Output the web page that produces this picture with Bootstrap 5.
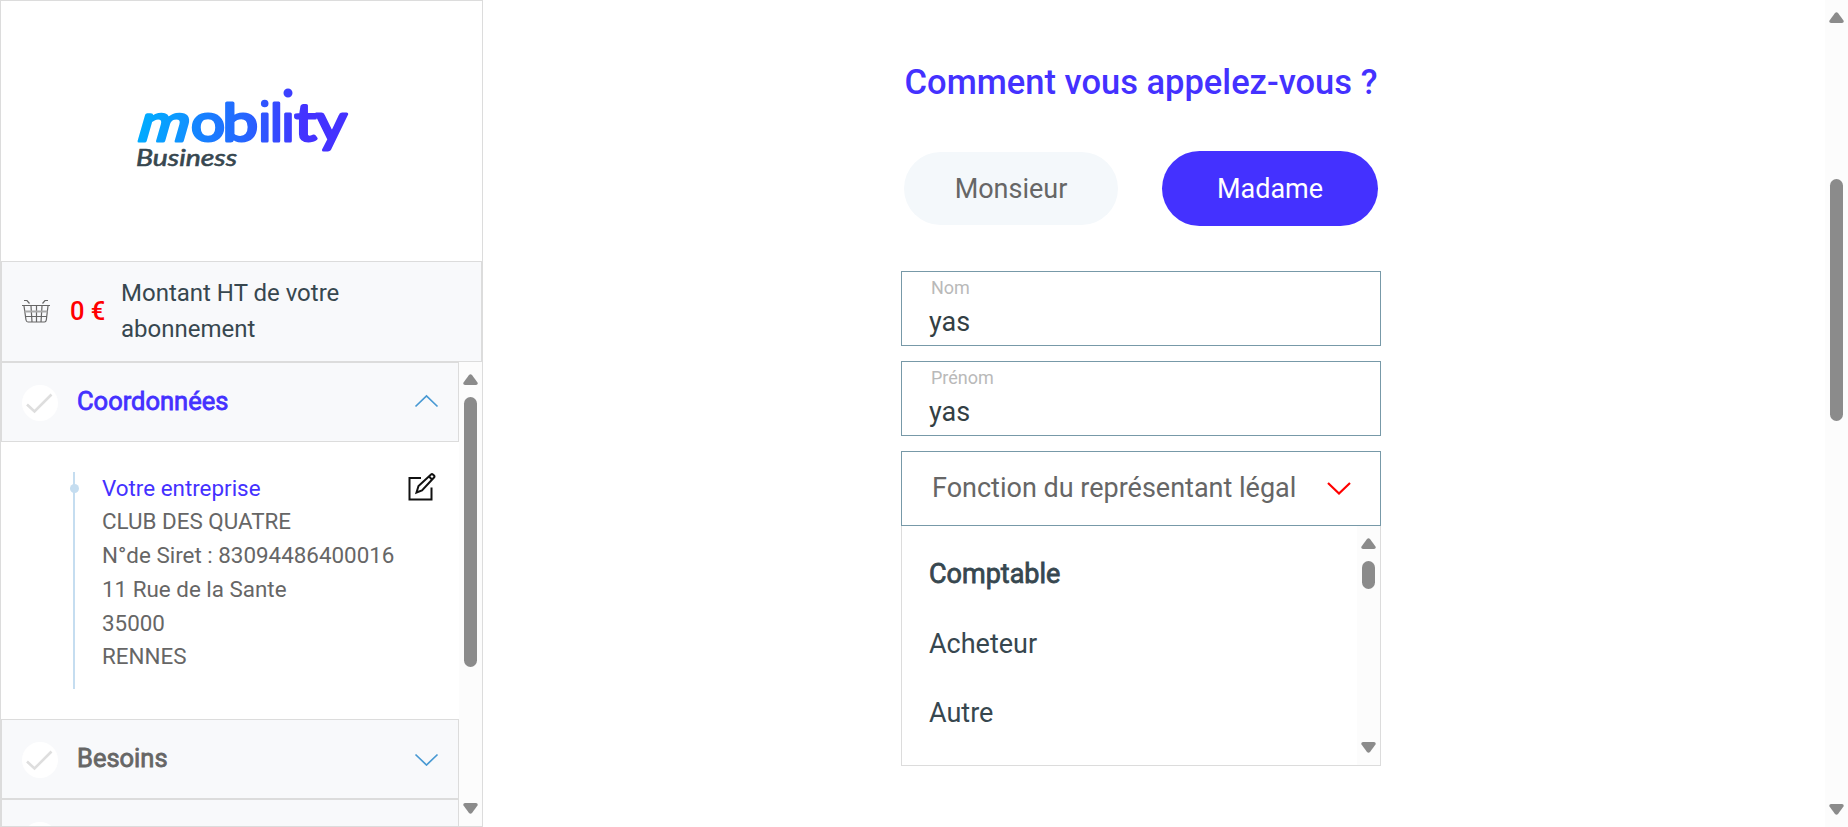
<!DOCTYPE html>
<html lang="fr">
<head>
<meta charset="utf-8">
<title>Mobility Business</title>
<link href="https://cdn.jsdelivr.net/npm/bootstrap@5.3.0/dist/css/bootstrap.min.css" rel="stylesheet">
<style>
body{font-family:Roboto,"Liberation Sans",sans-serif;color:#37474f;background:#fff;height:827px;overflow:hidden}
.side{width:483px;border:1px solid #dcdcdc}
.logo-box{height:260px}
.amount{height:101px;border:1px solid #dcdcdc;background:#f8f9fb;font-size:24px;line-height:36px;color:#37474f;padding:0 0 2px 19px}
.price{color:#f00;font-weight:500;font-size:25.5px;margin-left:19px;width:51px}
.step{height:80px;border:1px solid #dcdcdc;background:#f8f9fb;padding:0 19px 0 20px}
.tick{width:36px;height:36px;background:#fff;border-radius:50%;margin-top:2px}
.step-title{font-size:25.5px;margin:-1px 0 0 19px;color:#666;-webkit-text-stroke:.8px currentColor}
.vivid{color:#4431ff}
.details{height:277px;padding:30px 23px 0 72px}
.rail{width:2px;height:217px;background:#c5ddf0}
.rail-dot{width:9px;height:9px;border-radius:50%;background:#c5ddf0;left:-3px;top:12px}
.lines{font-size:22.4px;line-height:33.75px;color:#666;margin:-.5px 0 0 27px}
.bar{width:23px;background:#fcfcfc;padding:12px 0}
.thumb{width:13px;border-radius:7px;background:#8b8b8b}
.form-col{width:480px;margin-left:418px;padding-top:58px}
.ask{font-size:34.5px;font-weight:500;line-height:48px;color:#4431ff;text-align:center;white-space:nowrap}
.pick{border-radius:38px;font-size:27px;line-height:1;padding:2px 0 0}
.pick-off{width:214px;height:73px;background:#f4f8fb;color:#666}
.pick-on{width:216px;height:75px;background:#4431ff;color:#fff}
.field{height:75px;border:1px solid #7799a8;margin-bottom:15px;padding:0 27px}
.field-label{font-size:18px;line-height:22px;color:#b9b9b9;padding:5px 0 0 2px}
.field-value{font-size:27px;line-height:32px;margin-top:7px;color:#333f44}
.picker{font-size:27px;color:#666;padding:0 29px 0 30px;margin-bottom:0;white-space:nowrap}
.options{height:240px;border:1px solid #dcdcdc;border-top:0}
.option{font-size:27px;height:69.5px;padding-left:27px}
</style>
</head>
<body class="d-flex">
<svg width="0" height="0" class="position-absolute"><defs>
<linearGradient id="ink" gradientUnits="userSpaceOnUse" x1="2" y1="0" x2="210" y2="0"><stop offset="0" stop-color="#00abff"/><stop offset=".5" stop-color="#2468ff"/><stop offset=".8" stop-color="#4433ff"/><stop offset="1" stop-color="#4431ff"/></linearGradient>
<linearGradient id="ink-m" gradientUnits="userSpaceOnUse" x1="0" y1="0" x2="50" y2="0"><stop offset="0" stop-color="#00abff"/><stop offset="1" stop-color="#1390ff"/></linearGradient>
<symbol id="up" viewBox="0 0 15 11"><path d="M6 .9Q7.500-.6 9 .9L14.500 8.500Q15.300 10.800 13 11H2Q-.3 10.800.5 8.500Z" fill="#8b8b8b"/></symbol>
<symbol id="tick" viewBox="0 0 36 36"><path d="M5 19.500 12.500 26.500 29.500 9.500" fill="none" stroke="#dedede" stroke-width="2.600"/></symbol>
</defs></svg>

<aside class="side h-100 d-flex flex-column flex-shrink-0 overflow-hidden">
  <div class="logo-box flex-shrink-0">
    <svg width="260" height="190" viewBox="0 0 260 190" class="d-block" style="margin-left:134px">
      <g fill="url(#ink)" stroke="url(#ink)" stroke-width="3" stroke-linejoin="round" font-family="Lato" font-size="52">
        <text transform="translate(2 139.500) skewX(-16)" x="-2" y="0" fill="url(#ink-m)" stroke="url(#ink-m)" textLength="51" lengthAdjust="spacingAndGlyphs">m</text>
        <text y="139.500" x="56" textLength="34" lengthAdjust="spacingAndGlyphs">o</text>
        <text y="139.500" x="87.500" textLength="35.500" lengthAdjust="spacingAndGlyphs">b</text>
        <text y="139.500" x="123.600 135.300 146.800">ılı</text>
        <text y="139.500" x="159.500" textLength="22" lengthAdjust="spacingAndGlyphs">t</text>
        <text y="139.500" x="181" textLength="31" lengthAdjust="spacingAndGlyphs">y</text>
        <circle cx="129.700" cy="102.500" r="2.300"/><circle cx="153" cy="92" r="3"/>
      </g>
      <text x="1" y="165" font-family="Lato" font-size="22.500" font-weight="400" font-style="italic" fill="#37474f" stroke="#37474f" stroke-width=".6" textLength="101" lengthAdjust="spacingAndGlyphs">Business</text>
    </svg>
  </div>
  <div class="amount d-flex align-items-center flex-shrink-0">
    <svg width="30" height="26" viewBox="0 0 30 26" fill="none" stroke="#666" stroke-width="1.200"><path d="M1 7.500H29M3 8 5 22Q5.400 24 7 24H23.500Q25 24 25.300 22L27 8M4 18.500H26M10 8 11 24M15.500 8V24M21 8 20 24M3 2.500H6L8.500 5.500M27 2.500H24L21.500 5.500"/><path d="M3.500 13.500H26.500" stroke="#aaa" stroke-width="2"/></svg>
    <div class="price">0 €</div>
    <div>Montant HT de votre<br>abonnement</div>
  </div>
  <div class="d-flex flex-grow-1 overflow-hidden">
    <div class="flex-grow-1">
      <div class="step d-flex align-items-center">
        <svg class="tick"><use href="#tick"/></svg>
        <div class="step-title vivid">Coordonnées</div>
        <svg class="ms-auto" style="margin-top:-3px" width="25" height="14" viewBox="0 0 25 14" fill="none" stroke="#4899d3" stroke-width="1.700"><path d="M1.500 12.500 12.500 2 23.500 12.500"/></svg>
      </div>
      <div class="details d-flex">
        <div class="rail position-relative"><div class="rail-dot position-absolute"></div></div>
        <div class="lines"><div class="vivid">Votre entreprise</div>CLUB DES QUATRE<br>N°de Siret : 83094486400016<br>11 Rue de la Sante<br>35000<br>RENNES</div>
        <svg class="ms-auto flex-shrink-0" width="28" height="29" viewBox="0 0 28 29" fill="none" stroke="#111" stroke-width="2"><path d="M13 6H1.500V27.500H23.500V15.500"/><path d="M8.500 20.500 10.500 14 23 2.500Q24 1.700 25.200 2.700L26 3.500Q27 4.500 26 5.500L14 18.500ZM21 4.500 24 7.500"/></svg>
      </div>
      <div class="step d-flex align-items-center">
        <svg class="tick"><use href="#tick"/></svg>
        <div class="step-title">Besoins</div>
        <svg class="ms-auto" width="25" height="14" viewBox="0 0 25 14" fill="none" stroke="#4899d3" stroke-width="1.700"><path d="M1.500 2.500 12.500 13 23.500 2.500"/></svg>
      </div>
      <div class="step d-flex align-items-center"><div class="tick"></div></div>
    </div>
    <div class="bar d-flex flex-column align-items-center">
      <svg width="15" height="11"><use href="#up"/></svg>
      <div class="thumb" style="height:270px;margin-top:12px"></div>
      <svg class="mt-auto" width="15" height="11" transform="rotate(180)"><use href="#up"/></svg>
    </div>
  </div>
</aside>

<main class="flex-grow-1">
  <div class="form-col">
    <div class="ask">Comment vous appelez-vous ?</div>
    <div class="d-flex justify-content-between align-items-center" style="margin:45px 3px">
      <button class="btn border-0 pick pick-off">Monsieur</button>
      <button class="btn border-0 pick pick-on">Madame</button>
    </div>
    <div class="field"><div class="field-label">Nom</div><div class="field-value">yas</div></div>
    <div class="field"><div class="field-label">Prénom</div><div class="field-value">yas</div></div>
    <div class="field picker d-flex align-items-center justify-content-between"><span>Fonction du représentant légal</span>
      <svg width="24" height="13" viewBox="0 0 24 13" fill="none" stroke="#f00" stroke-width="2.200"><path d="M1 1 12 11.500 23 1"/></svg></div>
    <div class="options d-flex">
      <div class="flex-grow-1" style="padding-top:13.500px">
        <div class="option d-flex align-items-center" style="-webkit-text-stroke:.8px currentColor">Comptable</div>
        <div class="option d-flex align-items-center">Acheteur</div>
        <div class="option d-flex align-items-center">Autre</div>
      </div>
      <div class="bar d-flex flex-column align-items-center">
        <svg width="15" height="11"><use href="#up"/></svg>
        <div class="thumb" style="height:28px;margin-top:12px"></div>
        <svg class="mt-auto" width="15" height="11" transform="rotate(180)"><use href="#up"/></svg>
      </div>
    </div>
  </div>
</main>
<div class="bar h-100 d-flex flex-column align-items-center flex-shrink-0">
  <svg width="15" height="11"><use href="#up"/></svg>
  <div class="thumb" style="height:242px;margin-top:156px"></div>
  <svg class="mt-auto" width="15" height="11" transform="rotate(180)"><use href="#up"/></svg>
</div>
<script src="https://cdn.jsdelivr.net/npm/bootstrap@5.3.0/dist/js/bootstrap.bundle.min.js"></script>
</body>
</html>
